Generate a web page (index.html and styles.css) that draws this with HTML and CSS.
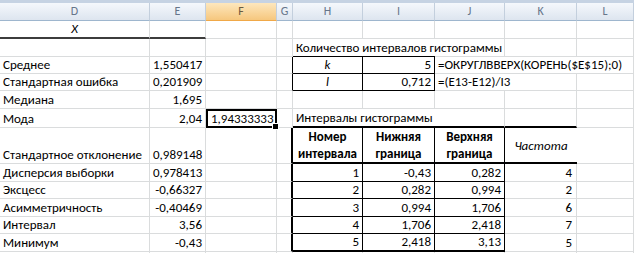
FILE: index.html
```html
<!DOCTYPE html>
<html lang="ru">
<head>
<meta charset="utf-8">
<title>Лист</title>
<link rel="stylesheet" href="styles.css">
</head>
<body>
<div class="topband"></div>
<table class="sheet">
<colgroup><col class="cD"><col class="cE"><col class="cF"><col class="cG"><col class="cH"><col class="cI"><col class="cJ"><col class="cK"><col class="cL"></colgroup>
<tr class="hdr"><td>D</td><td>E</td><td class="sel">F</td><td>G</td><td>H</td><td>I</td><td>J</td><td>K</td><td>L</td></tr>
<tr class="r18"><td class="c it bBd">X</td><td class="bBd"></td><td></td><td></td><td></td><td></td><td></td><td></td><td></td></tr>
<tr class="r18"><td></td><td></td><td></td><td></td><td colspan="2" class="noR bB">Количество интервалов гистограммы</td><td></td><td></td><td></td></tr>
<tr class="r17"><td>Среднее</td><td class="n">1,550417</td><td></td><td class="bR"></td><td class="c it bR bB">k</td><td class="n bR bB">5</td><td colspan="3">=ОКРУГЛВВЕРХ(КОРЕНЬ($E$15);0)</td></tr>
<tr class="r17"><td>Стандартная ошибка</td><td class="n">0,201909</td><td></td><td class="bR"></td><td class="c it bR bB">l</td><td class="n bR bB">0,712</td><td colspan="2">=(E13-E12)/I3</td><td></td></tr>
<tr class="r18"><td>Медиана</td><td class="n">1,695</td><td></td><td></td><td></td><td></td><td></td><td></td><td></td></tr>
<tr class="r17"><td>Мода</td><td class="n">2,04</td><td class="n active">1,94333333<span class="handle"></span></td><td></td><td colspan="2" class="noR bB2">Интервалы гистограммы</td><td class="bB2"></td><td class="bB2"></td><td></td></tr>
<tr class="r36"><td>Стандартное отклонение</td><td class="n">0,989148</td><td></td><td class="bR2"></td><td class="th bR bB2">Номер<br>интервала</td><td class="th bR bB2">Нижняя<br>граница</td><td class="th bR bB2">Верхняя<br>граница</td><td class="freq noR bB2">Частота</td><td></td></tr>
<tr class="r18"><td>Дисперсия выборки</td><td class="n">0,978413</td><td></td><td class="bR2"></td><td class="n bR bB">1</td><td class="n bR bB">-0,43</td><td class="n bR bB">0,282</td><td class="n k">4</td><td></td></tr>
<tr class="r17"><td>Эксцесс</td><td class="n">-0,66327</td><td></td><td class="bR2"></td><td class="n bR bB">2</td><td class="n bR bB">0,282</td><td class="n bR bB">0,994</td><td class="n k">2</td><td></td></tr>
<tr class="r18"><td>Асимметричность</td><td class="n">-0,40469</td><td></td><td class="bR2"></td><td class="n bR bB">3</td><td class="n bR bB">0,994</td><td class="n bR bB">1,706</td><td class="n k">6</td><td></td></tr>
<tr class="r17"><td>Интервал</td><td class="n">3,56</td><td></td><td class="bR2"></td><td class="n bR bB">4</td><td class="n bR bB">1,706</td><td class="n bR bB">2,418</td><td class="n k">7</td><td></td></tr>
<tr class="r18"><td>Минимум</td><td class="n">-0,43</td><td></td><td class="bR2"></td><td class="n bR bB2">5</td><td class="n bR bB2">2,418</td><td class="n bR bB2">3,13</td><td class="n k">5</td><td></td></tr>
<tr class="r18"><td></td><td></td><td></td><td></td><td></td><td></td><td></td><td></td><td></td></tr>
</table>
</body>
</html>
```
FILE: styles.css
```css
html, body {
  margin: 0;
  padding: 0;
  background: #ffffff;
  overflow: hidden;
}
body {
  font-family: Carlito, "Liberation Sans", Arial, sans-serif;
  font-size: 13px;
  color: #000;
}
.topband {
  height: 3px;
  background: #c6d3e3;
}
.sheet {
  border-collapse: separate;
  border-spacing: 0;
  table-layout: fixed;
  width: 634px;
}
.cD { width: 150px; }
.cE { width: 56px; }
.cF { width: 71px; }
.cG { width: 16px; }
.cH { width: 70px; }
.cI { width: 72px; }
.cJ { width: 70px; }
.cK { width: 72px; }
.cL { width: 57px; }

.sheet td {
  box-sizing: border-box;
  border-right: 1px solid #dadcdd;
  border-bottom: 1px solid #dadcdd;
  padding: 0 3px 1px 3px;
  vertical-align: bottom;
  white-space: nowrap;
  overflow: visible;
  line-height: 15px;
}
.hdr { height: 18px; }
.r17 { height: 17px; }
.r18 { height: 18px; }
.r36 { height: 36px; }

.sheet .hdr td {
  background: linear-gradient(#f5f8fc, #dde5ef);
  color: #66758a;
  text-align: center;
  vertical-align: middle;
  border-right: 1px solid #c3cfdd;
  border-bottom: 1px solid #9eb6ce;
  padding: 0;
  font-size: 12px;
}
.sheet .hdr td.sel {
  background: linear-gradient(#fde7bd, #f6c77e);
  border-bottom-color: #f0a848;
  color: #6b5a3e;
}
.sheet td.n { text-align: right; }
.sheet td.c { text-align: center; }
.sheet td.it { font-style: italic; }
.sheet td.k { padding-right: 4px; }
.sheet td.noR { border-right: none; }
.sheet td.bB { border-bottom: 1px solid #000; }
.sheet td.bB2 { border-bottom: 2px solid #000; }
.sheet td.bBd { border-bottom: 2px solid #3c3c3c; }
.sheet td.bR { border-right: 1px solid #000; }
.sheet td.bR2 { border-right: 2px solid #000; }
.sheet td.th {
  font-weight: bold;
  text-align: center;
  vertical-align: middle;
  line-height: 17px;
  padding: 0;
}
.sheet td.freq {
  font-style: italic;
  text-align: center;
  vertical-align: middle;
  padding: 0;
}
.sheet td.active {
  position: relative;
  border: 2px solid #000;
  padding-right: 2px;
  padding-bottom: 0;
}
.handle {
  position: absolute;
  right: -4px;
  bottom: -4px;
  width: 5px;
  height: 5px;
  background: #000;
  border: 1px solid #fff;
}
```
